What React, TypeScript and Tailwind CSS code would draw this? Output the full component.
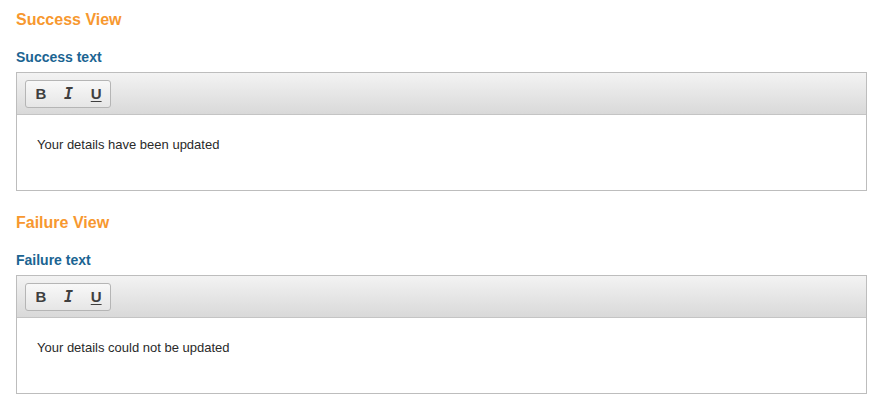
import React from "react";

function Toolbar() {
  return (
    <div className="h-[42px] border-b border-[#c4c4c4] bg-gradient-to-b from-[#f3f3f3] to-[#d9d9d9] pl-[8px] pt-[7px]">
      <div className="flex h-[28px] w-[86px] rounded-[3px] border border-[#b5b5b5] bg-gradient-to-b from-[#f8f8f8] to-[#e6e6e6] text-[#3f3f3f]">
        <button className="flex w-[29px] items-center justify-center pl-[1px] text-[15px] font-bold">B</button>
        <button className="flex w-[28px] items-center justify-center font-['DejaVu_Sans_Mono','Liberation_Mono',monospace] text-[15px] font-bold italic">
          I
        </button>
        <button className="flex w-[28px] items-center justify-center text-[15px] font-bold underline underline-offset-2">U</button>
      </div>
    </div>
  );
}

function Editor({ text }: { text: string }) {
  return (
    <div className="mr-[21px] border border-[#bdbdbd] bg-white">
      <Toolbar />
      <div className="h-[75px] pl-[20px] pt-[22px] text-[13px] leading-[16px] text-[#2a2a2a]">{text}</div>
    </div>
  );
}

function Section({ title, label, text }: { title: string; label: string; text: string }) {
  return (
    <section>
      <h2 className="h-[38px] pt-[10px] text-[16px] font-bold leading-[19px] text-[#f7982f]">{title}</h2>
      <h3 className="h-[34px] pt-[11px] text-[14px] font-bold leading-[16px] text-[#1b6492]">{label}</h3>
      <Editor text={text} />
    </section>
  );
}

export default function App() {
  return (
    <div className="flex h-[418px] w-[888px] flex-col gap-[12px] bg-white pl-[16px] font-['Liberation_Sans',Arial,sans-serif]">
      <Section title="Success View" label="Success text" text="Your details have been updated" />
      <Section title="Failure View" label="Failure text" text="Your details could not be updated" />
    </div>
  );
}
